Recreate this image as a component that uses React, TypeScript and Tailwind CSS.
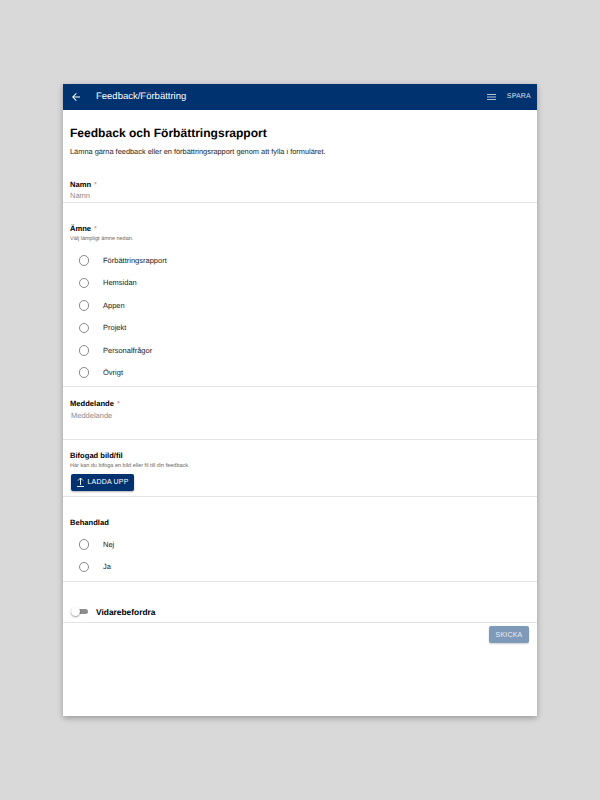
import React from "react";

function Radio({ label }: { label: string }) {
  return (
    <div className="flex h-[22.4px] items-center pl-[15.5px]">
      <span className="box-content h-[8.5px] w-[8.5px] shrink-0 rounded-full border border-[#8a8a8a]" />
      <span className="ml-[14px] text-[7.5px] text-[#222]">{label}</span>
    </div>
  );
}

function Label({ text, req }: { text: string; req?: boolean }) {
  return (
    <div className="text-[7.6px] font-bold leading-[11px] text-black">
      {text}
      {req && <span className="ml-[3px] font-normal text-[#e57373]">*</span>}
    </div>
  );
}

export default function App() {
  return (
    <div className="flex h-[800px] w-[600px] items-center justify-center bg-[#d9d9d9] font-['Liberation_Sans',Arial,sans-serif] [text-rendering:geometricPrecision]">
      <div className="flex h-[632px] w-[474px] flex-col bg-white shadow-[0_2px_6px_rgba(0,0,0,0.3)]">
        <header className="flex h-[25.5px] shrink-0 items-center bg-[#003270] pl-[7px] pr-[6px] text-white">
          <svg width="12" height="12" viewBox="0 0 24 24" fill="white">
            <path d="M20 11H7.83l5.59-5.59L12 4l-8 8 8 8 1.41-1.41L7.83 13H20v-2z" />
          </svg>
          <span className="ml-[14px] text-[9.5px]">Feedback/Förbättring</span>
          <svg className="ml-auto" width="9" height="6" viewBox="0 0 9 6" fill="#b4c1d4">
            <rect y="0" width="9" height="1" />
            <rect y="2.5" width="9" height="1" />
            <rect y="5" width="9" height="1" />
          </svg>
          <span className="ml-[11px] mt-[1px] text-[7px] tracking-[0.2px] text-[#dfe6ef]">SPARA</span>
        </header>

        <section className="px-[7px] pt-[16.5px]">
          <h1 className="text-[12.05px] font-bold leading-[15px] text-black">Feedback och Förbättringsrapport</h1>
          <p className="mt-[6px] text-[7.4px] leading-[10px] text-[#222]">Lämna gärna feedback eller en förbättringsrapport genom att fylla i formuläret.</p>
        </section>

        <section className="mt-[22px] border-b border-[#e4e4e4] px-[7px]">
          <Label text="Namn" req />
          <div className="text-[7.5px] leading-[12px] text-[#8a8a8a]">Namn</div>
        </section>

        <section className="border-b border-[#e4e4e4] pb-[2.5px] pt-[20px]">
          <div className="px-[7px]">
            <Label text="Ämne" req />
            <div className="mt-[1px] text-[5.5px] leading-[9px] text-[#666]">Välj lämpligt ämne nedan.</div>
          </div>
          <div className="mt-[5.5px]">
            {["Förbättringsrapport", "Hemsidan", "Appen", "Projekt", "Personalfrågor", "Övrigt"].map((l) => (
              <Radio key={l} label={l} />
            ))}
          </div>
        </section>

        <section className="h-[53px] border-b border-[#e4e4e4] px-[7px] pt-[11px]">
          <Label text="Meddelande" req />
          <div className="ml-[1px] mt-[0.5px] text-[7.5px] leading-[12px] text-[#8a8a8a]">Meddelande</div>
        </section>

        <section className="h-[57px] border-b border-[#e4e4e4] px-[7px] pt-[10px]">
          <Label text="Bifogad bild/fil" />
          <div className="mt-[1px] text-[5.5px] leading-[8px] text-[#666]">Här kan du bifoga en bild eller fil till din feedback.</div>
          <button className="ml-[1px] mt-[3.5px] flex h-[17px] w-[63px] items-center justify-center rounded-[2px] bg-[#003270] text-[7px] tracking-[0.2px] text-white shadow-[0_1px_2px_rgba(0,0,0,0.3)]">
            <svg width="9" height="10" viewBox="0 0 9 10" fill="none" stroke="white" strokeWidth="0.9" className="mr-[2px]">
              <path d="M4.5 8V1M2 3.5 4.5 1 7 3.5M1 9.5h7" />
            </svg>
            LADDA UPP
          </button>
        </section>

        <section className="h-[85px] border-b border-[#e4e4e4] pt-[20px]">
          <div className="px-[7px]"><Label text="Behandlad" /></div>
          <div className="mt-[5px]">
            <Radio label="Nej" />
            <Radio label="Ja" />
          </div>
        </section>

        <section className="flex h-[41px] items-center border-b border-[#e4e4e4] pl-[8px] pt-[19px]">
          <div className="relative h-[5px] w-[17px] rounded-full bg-[#8e8e8e]">
            <span className="absolute left-0 top-[-2px] h-[9px] w-[9px] rounded-full bg-white shadow-[0_1px_2px_rgba(0,0,0,0.4)]" />
          </div>
          <span className="ml-[8px] text-[8.4px] font-bold text-black">Vidarebefordra</span>
        </section>

        <div className="flex justify-end pr-[8px] pt-[3px]">
          <button className="h-[17px] w-[40px] rounded-[2px] bg-[#7f9ab8] text-[7px] tracking-[0.2px] text-[#e8edf3] shadow-[0_1px_2px_rgba(0,0,0,0.2)]">SKICKA</button>
        </div>
      </div>
    </div>
  );
}
